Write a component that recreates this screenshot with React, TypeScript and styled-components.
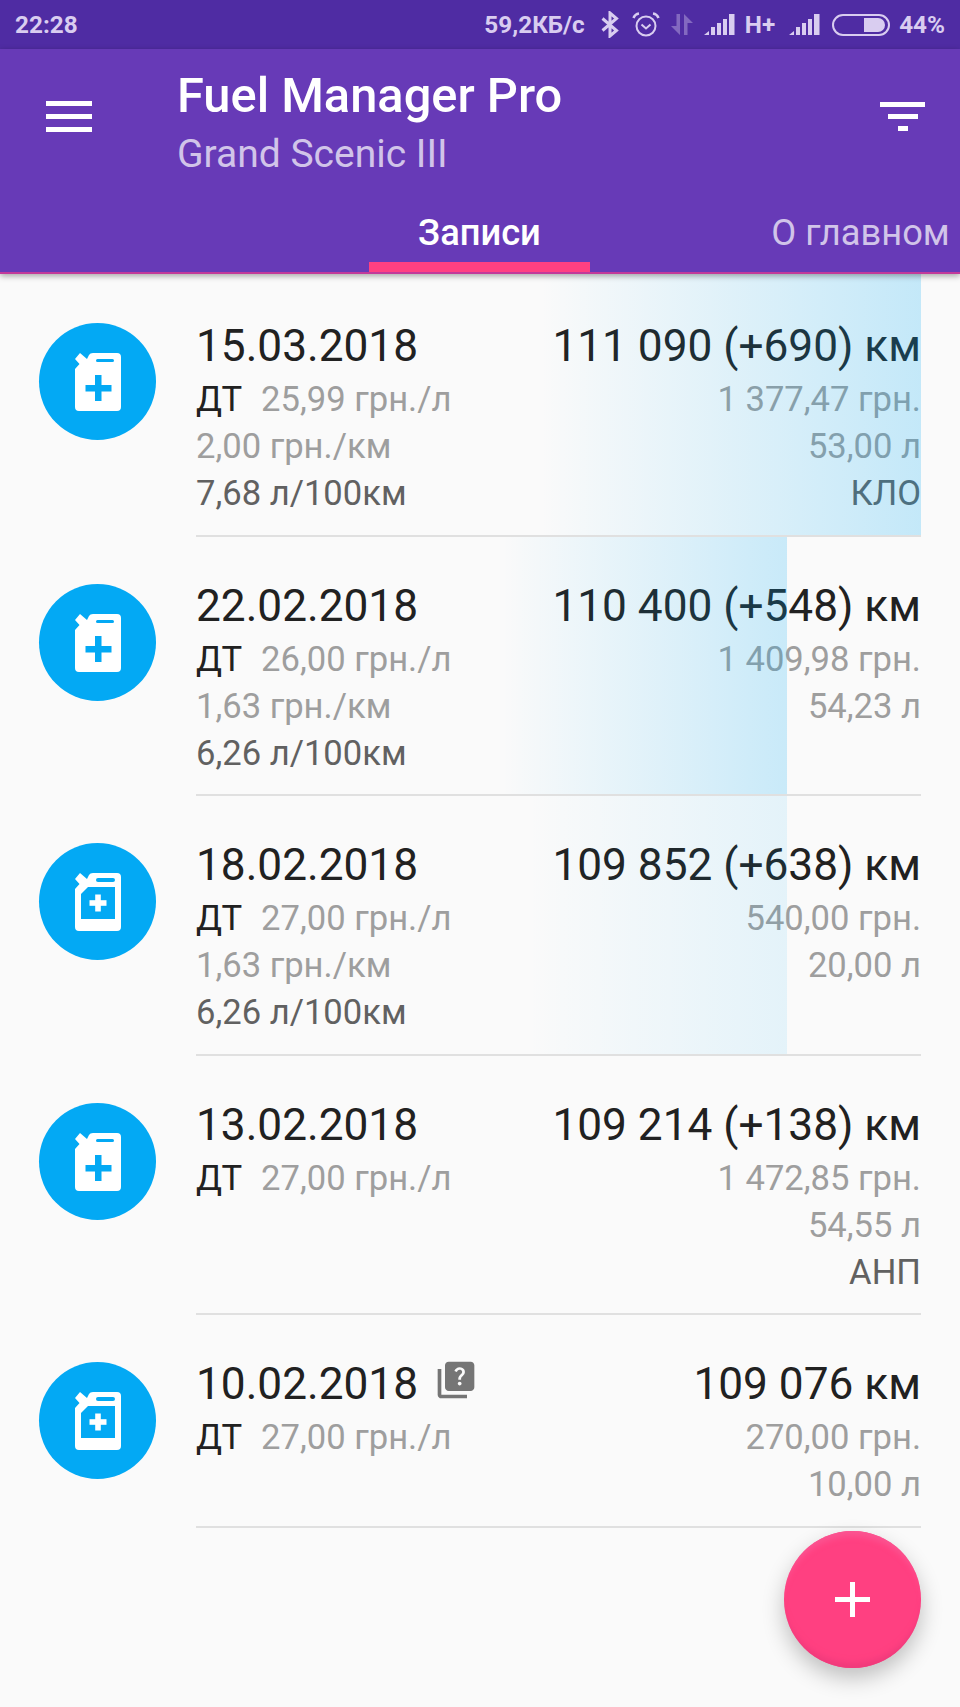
import React from 'react';
import styled, { createGlobalStyle } from 'styled-components';
import { MdQuiz } from 'react-icons/md';

const GlobalStyle = createGlobalStyle`
    html, body {
        margin: 0;
        padding: 0;
        background: #fafafa;
        font-family: Roboto, "Liberation Sans", sans-serif;
    }
`;

const Screen = styled.div`
    position: relative;
    width: 960px;
    height: 1707px;
    overflow: hidden;
    background: #fafafa;
`;

const StatusBar = styled.div`
    display: flex;
    align-items: center;
    height: 49px;
    padding: 0 15px;
    box-sizing: border-box;
    background: #4f2ca3;
    color: #d9cdf0;
    font-size: 24.3px;
    font-weight: 700;
`;

const StatusIcons = styled.div`
    display: flex;
    align-items: center;
    margin-left: auto;
`;

const StatusGlyph = styled.svg<{ $left: number }>`
    display: block;
    margin-left: ${(p) => p.$left}px;
`;

const StatusLabel = styled.span<{ $left?: number }>`
    margin-left: ${(p) => p.$left ?? 0}px;
`;

const AppBar = styled.header`
    position: relative;
    z-index: 2;
    background: #673ab7;
    height: 225px;
    border-bottom: 2px solid #c2399a;
    box-sizing: border-box;
    box-shadow: 0 2px 6px rgba(0, 0, 0, 0.35);
`;

const Toolbar = styled.div`
    display: flex;
    height: 161px;
    box-sizing: border-box;
`;

const MenuButton = styled.div`
    display: flex;
    flex-direction: column;
    gap: 8px;
    width: 46px;
    margin: 52px 0 0 46px;
`;

const MenuLine = styled.span`
    height: 5px;
    background: #fff;
`;

const TitleBlock = styled.div`
    margin-left: 85px;
    padding-top: 17px;
    flex: 1;
`;

const AppTitle = styled.div`
    font-size: 48.8px;
    font-weight: 500;
    line-height: 60px;
    color: #fff;
`;

const AppSubtitle = styled.div`
    font-size: 39px;
    line-height: 56px;
    color: #d1c4e9;
`;

const FilterButton = styled.div`
    display: flex;
    flex-direction: column;
    align-items: center;
    gap: 7px;
    width: 45px;
    margin: 53px 35px 0 0;
`;

const FilterLine = styled.span<{ $width: number }>`
    width: ${(p) => p.$width}px;
    height: 5px;
    background: #fff;
`;

const Tabs = styled.nav`
    display: flex;
    height: 62px;
    padding-left: 369px;
    overflow: hidden;
`;

const Tab = styled.div<{ $active?: boolean }>`
    flex: 0 0 221px;
    margin-right: ${(p) => (p.$active ? 160 : 0)}px;
    height: 62px;
    box-sizing: border-box;
    text-align: center;
    white-space: nowrap;
    font-size: 36.3px;
    line-height: 46px;
    font-weight: ${(p) => (p.$active ? 500 : 400)};
    color: ${(p) => (p.$active ? '#fff' : '#d1c4e9')};
    border-bottom: 10px solid ${(p) => (p.$active ? '#ff4081' : 'transparent')};
`;

const List = styled.main`
    padding-top: 0;
`;

const RoundIcon = styled.div`
    display: flex;
    align-items: center;
    justify-content: center;
    flex: 0 0 117px;
    width: 117px;
    height: 117px;
    border-radius: 50%;
    background: #03a9f4;
`;

const RowBody = styled.div`
    position: absolute;
    left: 196px;
    right: 39px;
    top: 0;
    bottom: 0;
    display: flex;
    justify-content: space-between;
    padding-top: 39px;
    border-bottom: 2px solid #e0e0e0;
    box-sizing: border-box;
`;

const Row = styled.section<{ $height: number }>`
    position: relative;
    display: flex;
    height: ${(p) => p.$height}px;
    box-sizing: border-box;
    padding: 47px 39px 0;

    &:first-child {
        padding-top: 49px;
    }

    &:first-child ${RowBody} {
        padding-top: 42px;
    }
`;

const Shade = styled.div<{ $width: number; $strength: number; $inset: number }>`
    position: absolute;
    top: 0;
    bottom: 0;
    right: ${(p) => p.$inset}px;
    width: ${(p) => p.$width}px;
    pointer-events: none;
    background: linear-gradient(to right, rgba(3, 169, 244, 0), rgba(3, 169, 244, ${(p) => p.$strength}));
`;

const Column = styled.div<{ $right?: boolean }>`
    display: flex;
    flex-direction: column;
    align-items: ${(p) => (p.$right ? 'flex-end' : 'flex-start')};
`;

const MainLine = styled.div`
    display: flex;
    align-items: center;
    height: 60px;
    font-size: 44.2px;
    color: #212121;
    white-space: nowrap;
`;

const SubLine = styled.div<{ $tone: 'dark' | 'grey' }>`
    height: 47px;
    line-height: 47px;
    font-size: 34.6px;
    white-space: nowrap;
    color: ${(p) => (p.$tone === 'dark' ? '#616161' : '#9e9e9e')};
`;

const FuelName = styled.span`
    color: #212121;
    margin-right: 19px;
`;

const Quiz = styled(MdQuiz)`
    margin-left: 16px;
    margin-top: -8px;
    color: #757575;
`;

const Fab = styled.button`
    position: absolute;
    left: 784px;
    top: 1531px;
    z-index: 3;
    display: flex;
    align-items: center;
    justify-content: center;
    width: 137px;
    height: 137px;
    padding: 0;
    border: 0;
    border-radius: 50%;
    background: #ff4081;
    box-shadow:
        inset 0 9px 6px -4px #fb5592,
        inset 0 -9px 6px -4px #f03a7b,
        0 10px 22px rgba(0, 0, 0, 0.24);
`;

const FabPlus = styled.svg`
    display: block;
`;

function CanIcon({ framed }: { framed?: boolean }) {
    return (
        <svg width="46" height="58" viewBox="0 0 46 58">
            <path
                fill="#fff"
                d="M5 0 L12 6 L14 2 Q15 0 18 0 L42 0 Q46 0 46 4 L46 54 Q46 58 42 58 L4 58 Q0 58 0 54 L0 16 L4.5 11 L0 6 Z"
            />
            {framed ? (
                <>
                    <path fill="#03a9f4" d="M6 21 L13 14 L40 14 L40 46 L6 46 Z" />
                    <rect x="21" y="5" width="19" height="4" rx="2" fill="#03a9f4" />
                    <rect x="20.2" y="21.5" width="5.6" height="17" fill="#fff" />
                    <rect x="14.5" y="27.2" width="17" height="5.6" fill="#fff" />
                </>
            ) : (
                <>
                    <rect x="21" y="6" width="18" height="3" rx="1.5" fill="#03a9f4" />
                    <rect x="20" y="22" width="6.5" height="26" fill="#03a9f4" />
                    <rect x="10.5" y="32" width="26" height="6.5" fill="#03a9f4" />
                </>
            )}
        </svg>
    );
}

function Bluetooth() {
    return (
        <StatusGlyph $left={16} width="18" height="27" viewBox="0 0 18 27" fill="none" stroke="#d9cdf0" strokeWidth="3">
            <path d="M1.5 7.5 L15.5 19.5 L9 25 L9 2 L15.5 7.5 L1.5 19.5" />
        </StatusGlyph>
    );
}

function Alarm() {
    return (
        <StatusGlyph $left={13} width="28" height="25" viewBox="0 0 28 25" fill="none" stroke="#d9cdf0" strokeWidth="2">
            <circle cx="14" cy="14" r="9.5" />
            <path d="M9.5 12.5 L14 16.5 L18.5 12.5" />
            <path d="M1.5 6 Q3 2 7 1.5 M26.5 6 Q25 2 21 1.5" strokeWidth="2.6" />
        </StatusGlyph>
    );
}

function DataArrows() {
    return (
        <StatusGlyph $left={11} width="22" height="21" viewBox="0 0 22 21" fill="#d9cdf0" opacity="0.38">
            <path d="M5.5 0 H9 V21 L0 12 H5.5 Z" />
            <path d="M13 21 V0 L22 9 H16.5 V21 Z" />
        </StatusGlyph>
    );
}

function Signal({ left }: { left: number }) {
    return (
        <StatusGlyph $left={left} width="31" height="21" viewBox="0 0 31 21" fill="#d9cdf0">
            <path d="M0 21 L5 17 V21 Z" />
            <rect x="7" y="13" width="4" height="8" />
            <rect x="13" y="9" width="4" height="12" />
            <rect x="19" y="5" width="4" height="16" />
            <rect x="25" y="0" width="5.5" height="21" />
        </StatusGlyph>
    );
}

function Battery() {
    return (
        <StatusGlyph $left={12} width="58" height="22" viewBox="0 0 58 22">
            <rect x="1" y="1" width="56" height="20" rx="10" fill="none" stroke="#d9cdf0" strokeWidth="2" />
            <path d="M32 4 H46 A7 7 0 0 1 46 18 H32 Z" fill="#d9cdf0" />
        </StatusGlyph>
    );
}

interface FuelRecord {
    date: string;
    price: string;
    perKm?: string;
    per100?: string;
    odometer: string;
    cost: string;
    liters: string;
    station?: string;
    framed?: boolean;
    quiz?: boolean;
    height: number;
    shade?: { width: number; strength: number; inset: number };
}

const records: FuelRecord[] = [
    {
        date: '15.03.2018', price: '25,99 грн./л', perKm: '2,00 грн./км', per100: '7,68 л/100км',
        odometer: '111 090 (+690) км', cost: '1 377,47 грн.', liters: '53,00 л', station: 'КЛО',
        height: 263, shade: { width: 380, strength: 0.22, inset: 0 },
    },
    {
        date: '22.02.2018', price: '26,00 грн./л', perKm: '1,63 грн./км', per100: '6,26 л/100км',
        odometer: '110 400 (+548) км', cost: '1 409,98 грн.', liters: '54,23 л',
        height: 259, shade: { width: 285, strength: 0.2, inset: 134 },
    },
    {
        date: '18.02.2018', price: '27,00 грн./л', perKm: '1,63 грн./км', per100: '6,26 л/100км',
        odometer: '109 852 (+638) км', cost: '540,00 грн.', liters: '20,00 л', framed: true,
        height: 260, shade: { width: 260, strength: 0.09, inset: 134 },
    },
    {
        date: '13.02.2018', price: '27,00 грн./л',
        odometer: '109 214 (+138) км', cost: '1 472,85 грн.', liters: '54,55 л', station: 'АНП',
        height: 259,
    },
    {
        date: '10.02.2018', price: '27,00 грн./л', quiz: true,
        odometer: '109 076 км', cost: '270,00 грн.', liters: '10,00 л', framed: true,
        height: 213,
    },
];

export default function App() {
    return (
        <Screen>
            <GlobalStyle />
            <StatusBar>
                <span>22:28</span>
                <StatusIcons>
                    <StatusLabel>59,2КБ/с</StatusLabel>
                    <Bluetooth />
                    <Alarm />
                    <DataArrows />
                    <Signal left={11} />
                    <StatusLabel $left={10}>H+</StatusLabel>
                    <Signal left={14} />
                    <Battery />
                    <StatusLabel $left={9}>44%</StatusLabel>
                </StatusIcons>
            </StatusBar>
            <AppBar>
                <Toolbar>
                    <MenuButton>
                        <MenuLine />
                        <MenuLine />
                        <MenuLine />
                    </MenuButton>
                    <TitleBlock>
                        <AppTitle>Fuel Manager Pro</AppTitle>
                        <AppSubtitle>Grand Scenic III</AppSubtitle>
                    </TitleBlock>
                    <FilterButton>
                        <FilterLine $width={45} />
                        <FilterLine $width={30} />
                        <FilterLine $width={10} />
                    </FilterButton>
                </Toolbar>
                <Tabs>
                    <Tab $active>Записи</Tab>
                    <Tab>О главном</Tab>
                </Tabs>
            </AppBar>
            <List>
                {records.map((r) => (
                    <Row key={r.date} $height={r.height}>
                        <RoundIcon>
                            <CanIcon framed={r.framed} />
                        </RoundIcon>
                        <RowBody>
                            {r.shade && <Shade $width={r.shade.width} $strength={r.shade.strength} $inset={r.shade.inset} />}
                            <Column>
                                <MainLine>
                                    {r.date}
                                    {r.quiz && <Quiz size={44} />}
                                </MainLine>
                                <SubLine $tone="grey">
                                    <FuelName>ДТ</FuelName>
                                    {r.price}
                                </SubLine>
                                {r.perKm && <SubLine $tone="grey">{r.perKm}</SubLine>}
                                {r.per100 && <SubLine $tone="dark">{r.per100}</SubLine>}
                            </Column>
                            <Column $right>
                                <MainLine>{r.odometer}</MainLine>
                                <SubLine $tone="grey">{r.cost}</SubLine>
                                <SubLine $tone="grey">{r.liters}</SubLine>
                                {r.station && <SubLine $tone="dark">{r.station}</SubLine>}
                            </Column>
                        </RowBody>
                    </Row>
                ))}
            </List>
            <Fab>
                <FabPlus width="35" height="35" viewBox="0 0 35 35" fill="#fff">
                    <rect x="15" y="0" width="5" height="35" />
                    <rect x="0" y="15" width="35" height="5" />
                </FabPlus>
            </Fab>
        </Screen>
    );
}
